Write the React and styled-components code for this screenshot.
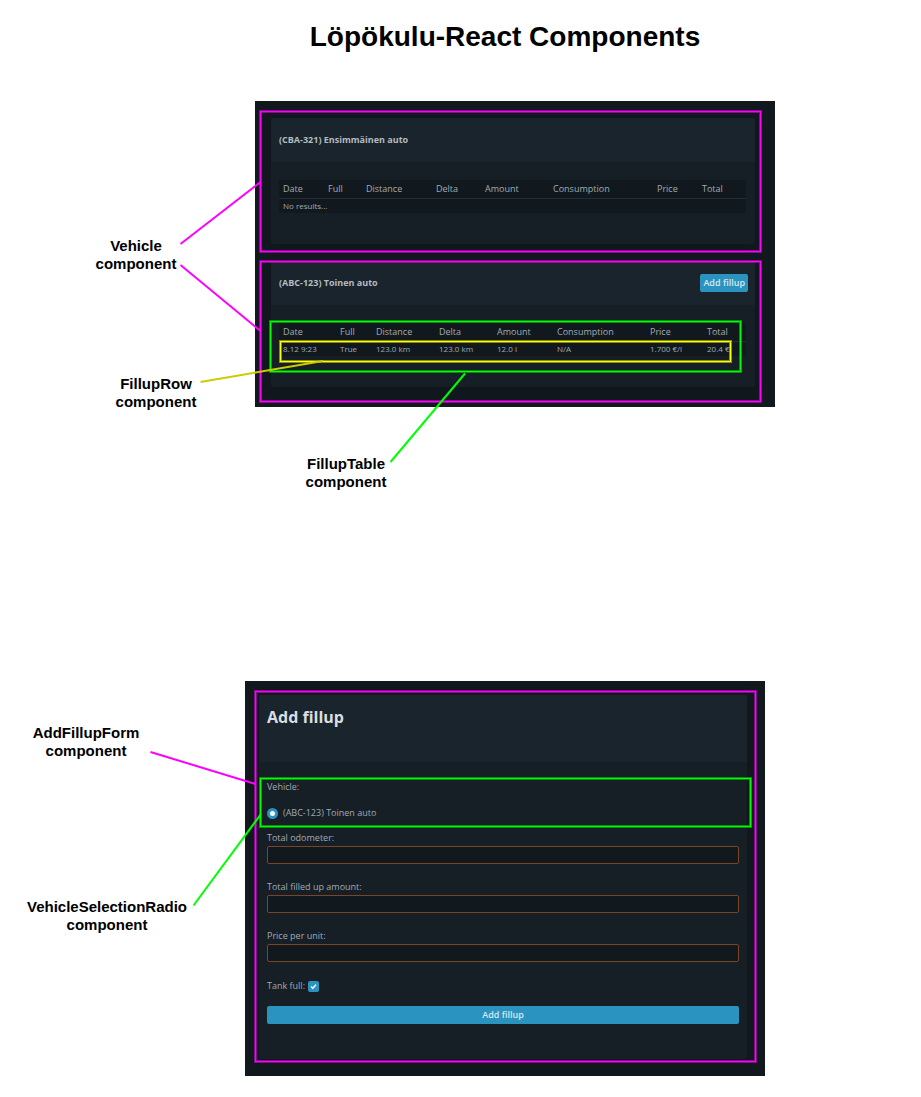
import React from "react";
import styled, { createGlobalStyle } from "styled-components";

const MAGENTA = "255, 0, 255";
const GREEN = "0, 255, 0";
const YELLOW = "255, 255, 0";

const GlobalStyle = createGlobalStyle`
  *, *::before, *::after { box-sizing: border-box; }
  body {
    margin: 0;
    background: #ffffff;
    color: #000000;
    font-family: "Liberation Sans", Arial, sans-serif;
  }
`;

const Page = styled.main`
  padding: 21px 0;
`;

const Title = styled.h1`
  margin: 0 0 48px;
  padding-left: 89px;
  font-size: 28px;
  line-height: 32px;
  text-align: center;
`;

const Diagram = styled.section`
  position: relative;
  padding: 0 ${(p) => p.$right}px ${(p) => p.$below || 0}px ${(p) => p.$left}px;
`;

/* Caption node on the diagram canvas, centred on its x coordinate. */
const Caption = styled.p`
  position: absolute;
  left: ${(p) => p.$x}px;
  top: ${(p) => p.$y}px;
  margin: 0;
  transform: translateX(-50%);
  font-size: 15px;
  font-weight: bold;
  line-height: 18px;
  text-align: center;
`;

const Connectors = styled.svg`
  position: absolute;
  left: 0;
  top: 0;
  overflow: visible;
  pointer-events: none;
  stroke-width: 2;
`;

/* Outline drawn over a component of the screen. */
const Outline = styled.span`
  position: absolute;
  inset: ${(p) => p.$inset};
  border: 1px solid rgb(${(p) => p.$rgb});
  box-shadow: 0 0 0 1px rgba(${(p) => p.$rgb}, 0.5),
    inset 0 0 0 1px rgba(${(p) => p.$rgb}, 0.5);
  pointer-events: none;
`;

const Screen = styled.div`
  position: relative;
  display: flex;
  flex-direction: column;
  gap: 17px;
  padding: ${(p) => p.$padding};
  background: #11191f;
  color: #a3abb0;
  font-family: "Open Sans", "Noto Sans", sans-serif;
  font-size: 9px;
  line-height: 14px;
`;

const Card = styled.article`
  position: relative;
  border-radius: 2px;
  background: #161e26;
  box-shadow: 0 2px 12px rgba(0, 0, 0, 0.15);
`;

const CardHeader = styled.header`
  display: flex;
  align-items: center;
  justify-content: space-between;
  min-height: 44px;
  padding: 0 7px 0 8px;
  border-radius: 2px 2px 0 0;
  background: #1a242c;
`;

const CardTitle = styled.h2`
  margin: 0;
  color: #b3bbc0;
  font-size: 9px;
  font-weight: 700;
  line-height: 14px;
`;

const FormHeader = styled.header`
  height: 67px;
  padding: 10px 8px;
  border-radius: 2px 2px 0 0;
  background: #1a242c;
`;

const FormTitle = styled.h2`
  margin: 0;
  color: #d8dee2;
  font-size: 16px;
  font-weight: 700;
  line-height: 24px;
`;

const Button = styled.button`
  height: 18px;
  padding: 0 3px;
  border: 0;
  border-radius: 2px;
  background: #2b93bf;
  color: #d5eaf3;
  font: inherit;
  font-weight: 600;
  line-height: 18px;
  white-space: nowrap;
`;

const WideButton = styled(Button)`
  display: block;
  width: 100%;
  margin-top: 12px;
`;

const TableArea = styled.div`
  position: relative;
  padding: 18px 9px 31px 8px;
`;

const Table = styled.table`
  width: 100%;
  table-layout: fixed;
  border-collapse: collapse;
  background: #11191f;
`;

const Col = styled.col`
  width: ${(p) => p.$width}px;
`;

const Th = styled.th`
  height: 18px;
  padding: 0 0 0 4px;
  border-bottom: 1px solid #1f2d37;
  font-weight: normal;
  line-height: 14px;
  text-align: left;
  white-space: nowrap;
`;

const Td = styled.td`
  height: 15px;
  padding: 0 0 0 4px;
  font-size: 8px;
  line-height: 14px;
  white-space: nowrap;
`;

const Form = styled.form`
  padding: 18px 8px 35px;
`;

const Fieldset = styled.fieldset`
  margin: 0 0 11px;
  padding: 0;
  border: 0;
`;

const Legend = styled.legend`
  margin-bottom: 12px;
  padding: 0;
`;

const RadioLabel = styled.label`
  display: flex;
  align-items: center;
  gap: 5px;
`;

const Radio = styled.input`
  appearance: none;
  width: 11px;
  height: 11px;
  margin: 0;
  border: 3px solid #2b93bf;
  border-radius: 50%;
  background: #ffffff;
`;

const Field = styled.label`
  display: block;
  margin-bottom: 16px;
`;

const TextInput = styled.input`
  display: block;
  width: 100%;
  height: 18px;
  margin: 1px 0 0;
  padding: 0 6px;
  border: 1px solid #7a4527;
  border-radius: 2px;
  outline: none;
  background: #11191f;
  color: inherit;
  font: inherit;
`;

const CheckLabel = styled.label`
  display: flex;
  align-items: center;
  gap: 3px;
  height: 16px;
`;

const CheckBox = styled.span`
  display: grid;
  place-items: center;

  > * { grid-area: 1 / 1; }
`;

const CheckInput = styled.input`
  appearance: none;
  width: 11px;
  height: 11px;
  margin: 0;
  border-radius: 2px;
  background: #2b93bf;
`;

const CheckMark = styled.svg`
  fill: none;
  stroke: #ffffff;
  stroke-width: 1.4;
  pointer-events: none;
`;

const HEADINGS = ["Date", "Full", "Distance", "Delta", "Amount", "Consumption", "Price", "Total"];

function FillupTable({ columns, rows }) {
  return (
    <Table>
      <colgroup>
        {columns.map((width, i) => (
          <Col key={i} $width={width} />
        ))}
      </colgroup>
      <thead>
        <tr>
          {HEADINGS.map((heading) => (
            <Th key={heading} scope="col">{heading}</Th>
          ))}
        </tr>
      </thead>
      <tbody>
        {rows.length === 0 && (
          <tr>
            <Td colSpan={HEADINGS.length}>No results...</Td>
          </tr>
        )}
        {rows.map((row) => (
          <tr key={row[0]}>
            {row.map((value, i) => (
              <Td key={i}>{value}</Td>
            ))}
          </tr>
        ))}
      </tbody>
    </Table>
  );
}

function Vehicle({ name, columns, rows, action, outline, children }) {
  return (
    <Card>
      <CardHeader>
        <CardTitle>{name}</CardTitle>
        {action && <Button type="button">{action}</Button>}
      </CardHeader>
      <TableArea>
        <FillupTable columns={columns} rows={rows} />
        {children}
      </TableArea>
      <Outline $rgb={MAGENTA} $inset={outline} />
    </Card>
  );
}

function AddFillupForm() {
  return (
    <Card>
      <FormHeader>
        <FormTitle>Add fillup</FormTitle>
      </FormHeader>
      <Form onSubmit={(e) => e.preventDefault()}>
        <Fieldset>
          <Legend>Vehicle:</Legend>
          <RadioLabel>
            <Radio type="radio" name="vehicle" defaultChecked />
            (ABC-123) Toinen auto
          </RadioLabel>
        </Fieldset>
        {["Total odometer:", "Total filled up amount:", "Price per unit:"].map((label) => (
          <Field key={label}>
            {label}
            <TextInput type="text" />
          </Field>
        ))}
        <CheckLabel>
          Tank full:
          <CheckBox>
            <CheckInput type="checkbox" defaultChecked />
            <CheckMark width="7" height="7" viewBox="0 0 7 7" aria-hidden="true">
              <path d="M1 3.6 L2.8 5.2 L6 1.8" />
            </CheckMark>
          </CheckBox>
        </CheckLabel>
        <WideButton type="submit">Add fillup</WideButton>
      </Form>
      <Outline $rgb={MAGENTA} $inset="-4px -9px -3px -4px" />
      <Outline $rgb={GREEN} $inset="83px -4px 232px 1px" />
    </Card>
  );
}

export default function App() {
  return (
    <>
      <GlobalStyle />
      <Page>
        <Title>Löpökulu-React Components</Title>

        <Diagram $left={255} $right={146} $below={274}>
          <Screen $padding="17px 20px 20px 16px">
            <Vehicle
              name="(CBA-321) Ensimmäinen auto"
              columns={[45, 38, 70, 49, 68, 104, 45, 48]}
              rows={[]}
              outline="-7px -6px -8px -11px"
            />
            <Vehicle
              name="(ABC-123) Toinen auto"
              columns={[57, 36, 63, 58, 60, 93, 57, 43]}
              rows={[["8.12 9:23", "True", "123.0 km", "123.0 km", "12.0 l", "N/A", "1.700 €/l", "20.4 €"]]}
              action="Add fillup"
              outline="0 -6px -15px -11px"
            >
              <Outline $rgb={GREEN} $inset="16px 14px 15px -1px" />
              <Outline $rgb={YELLOW} $inset="36px 24px 25px 9px" />
            </Vehicle>
          </Screen>
          <Caption $x={136} $y={136}>Vehicle<br />component</Caption>
          <Caption $x={156} $y={274}>FillupRow<br />component</Caption>
          <Caption $x={346} $y={354}>FillupTable<br />component</Caption>
          <Connectors width="1" height="1" aria-hidden="true">
            <path stroke="#ff00ff" d="M180.5 143 L260.5 81" />
            <path stroke="#ff00ff" d="M180.5 164 L260.5 230" />
            <path stroke="#cccc00" d="M200.5 281 L323 260" />
            <path stroke="#00ff00" d="M465 272.5 L390.5 361" />
          </Connectors>
        </Diagram>

        <Diagram $left={245} $right={156}>
          <Screen $padding="14px 18px 17px 14px">
            <AddFillupForm />
          </Screen>
          <Caption $x={86} $y={43}>AddFillupForm<br />component</Caption>
          <Caption $x={107} $y={217}>VehicleSelectionRadio<br />component</Caption>
          <Connectors width="1" height="1" aria-hidden="true">
            <path stroke="#ff00ff" d="M150.5 71 L255.5 103" />
            <path stroke="#00ff00" d="M193.5 224.5 L261 133" />
          </Connectors>
        </Diagram>
      </Page>
    </>
  );
}
